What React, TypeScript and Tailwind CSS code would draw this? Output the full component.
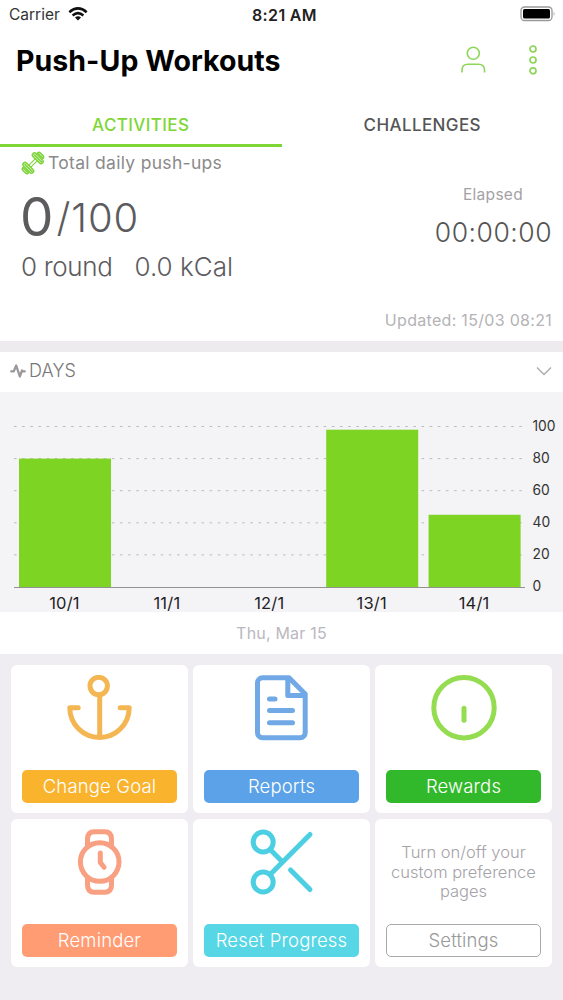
import React, {useState} from 'react';

const days = [
    {label: "10/1", value: 80},
    {label: "11/1", value: 0},
    {label: "12/1", value: 0},
    {label: "13/1", value: 98},
    {label: "14/1", value: 45},
];

const iconProps = {
    viewBox: "0 0 66 66",
    fill: "none",
    strokeWidth: 5,
    strokeLinecap: "round" as const,
    strokeLinejoin: "round" as const,
};

const AnchorIcon = () => (
    <svg {...iconProps} className="w-[66px] h-[66px] stroke-[#f4b653]">
        <circle cx="31.7" cy="11" r="8.7" />
        <path d="M32.7 20v42M11.2 32.7H2.8a29.7 29.7 0 0 0 59.4 0H53.2" />
    </svg>
);

const ReportIcon = () => (
    <svg {...iconProps} className="w-[66px] h-[66px] stroke-[#71a8e6]">
        <path d="M40 2.8H13.5a5 5 0 0 0-5 5v50a5 5 0 0 0 5 5h37.7a5 5 0 0 0 5-5V19L40 2.8M38.8 3.5v17h17" />
        <path d="M20.5 24h5.5M20.5 35.4h23M20.5 47.8h23" />
    </svg>
);

const InfoIcon = () => (
    <svg {...iconProps} className="w-[66px] h-[66px] stroke-[#94dc50]">
        <circle cx="33" cy="32.7" r="30.2" />
        <path d="M33 33.2v12" />
    </svg>
);

const WatchIcon = () => (
    <svg {...iconProps} className="w-[66px] h-[66px] stroke-[#f8a081]">
        <circle cx="32.7" cy="33" r="19.3" />
        <path d="M20.5 17.5V10q0-7.3 7-7.3h10q7 0 7 7.3v7.5M20.5 48.5V56q0 7.3 7 7.3h10q7 0 7-7.3v-7.5" />
        <path d="M33.3 24v9.5l3.8 4.8" />
    </svg>
);

const ScissorsIcon = () => (
    <svg {...iconProps} className="w-[66px] h-[66px] stroke-[#4dcfe3]">
        <circle cx="14.2" cy="13" r="10" />
        <circle cx="14.2" cy="53" r="10" />
        <path d="M21.2 20.5L33.5 33M21.2 45.5L61 5.5M41.5 41l19.5 19.5" />
    </svg>
);

const DumbbellIcon = () => (
    <svg viewBox="0 0 24 24" fill="none" strokeLinecap="round" strokeLinejoin="round" className="w-6 h-6 stroke-[#7ed43c]" strokeWidth="1.5">
        <path d="M12 2.5q1.5-1.5 3 0l6.500 6.500q1.500 1.500 0 3t-3 0L12 5.500q-1.500-1.500 0-3z" fill="#d5f3bd" />
        <path d="M2.500 12q1.500-1.500 3 0l6.500 6.500q1.500 1.500 0 3t-3 0L2.500 15q-1.500-1.500 0-3z" fill="#d5f3bd" />
        <path d="M16.500 2q1.500-1.500 3 0l2.500 2.500q1.500 1.500 0 3zM2 16.500q-1.500 1.500 0 3L4.500 22q1.500 1.500 3 0z" fill="#d5f3bd" />
        <path d="M13.500 4l7 7M4 13.500l7 7" />
        <path d="M13.700 8.300l-5.400 5.400M15.700 10.300l-5.400 5.400" strokeWidth="1.1" />
    </svg>
);

const tiles = [
    {title: "Change Goal", icon: <AnchorIcon />, color: "bg-[#fab32c]"},
    {title: "Reports", icon: <ReportIcon />, color: "bg-[#5ba2e8]"},
    {title: "Rewards", icon: <InfoIcon />, color: "bg-[#32b92b]"},
    {title: "Reminder", icon: <WatchIcon />, color: "bg-[#ff9c74]"},
    {title: "Reset Progress", icon: <ScissorsIcon />, color: "bg-[#57d6e5]"},
];

const StatusBar = () => (
    <div className="flex h-7 items-center justify-between pl-[9px] pr-[7px] pt-px leading-none">
        <div className="flex flex-1 items-center gap-2">
            <span className="text-[15.5px] text-[#333]">Carrier</span>
            <svg viewBox="0 0 20 14" className="w-5 h-3.5 -mt-px" fill="none" stroke="#111" strokeWidth="2.5">
                <path d="M1.3 5.2q8.7-7.6 17.4 0M4.6 8.5q5.4-4.7 10.8 0" />
                <path d="M7 10.4q3-2.3 6 0l-3 3.2z" fill="#111" stroke="none" />
            </svg>
        </div>
        <span className="pl-1 text-[16px] font-semibold tracking-[0.35px] text-[#222]">8:21 AM</span>
        <div className="flex flex-1 justify-end">
            <svg viewBox="0 0 36 16" className="-mt-px w-9 h-4">
                <rect x="1" y="1" width="31" height="13.5" rx="3.5" fill="none" stroke="#999" strokeWidth="1.3" />
                <rect x="3" y="3" width="27" height="9.5" rx="1.5" fill="#000" />
                <path d="M33.7 5.5q1.6 2.2 0 4.5z" fill="#999" />
            </svg>
        </div>
    </div>
);

const DaysChart = () => {
    const scale = 1.605;
    return (
        <svg viewBox="0 0 563 220" className="block h-[220px] w-full bg-[#f4f3f6]">
            {[100, 80, 60, 40, 20, 0].map((tick) => (
                <g key={tick}>
                    {tick > 0 && (
                        <path d={`M14 ${195 - tick * scale}H523`} stroke="#bcbbbe" strokeDasharray="2.6 5.55" />
                    )}
                    <text x="532.5" y={199.3 - tick * scale} fontSize="13.8" fill="#333">{tick}</text>
                </g>
            ))}
            {days.map((day, i) => (
                <g key={day.label}>
                    <rect x={19 + i * 102.4} y={195 - day.value * scale} width="92" height={day.value * scale} fill="#7dd422" />
                    <text x={64.5 + i * 102.4} y="217" fontSize="16.5" letterSpacing="0.2" fill="#222" textAnchor="middle">{day.label}</text>
                </g>
            ))}
            <path d="M14 195.5H525" stroke="#929292" />
        </svg>
    );
};

const App = () => {
    const [tab, setTab] = useState("ACTIVITIES");

    return (
        <div className="flex h-[1000px] w-[563px] flex-col overflow-hidden bg-white font-['Inter',sans-serif]">
            <StatusBar />
            <header className="flex h-16 items-center justify-between pl-4 pr-[22px]">
                <h1 className="pt-0.5 text-[28.5px] font-bold leading-none tracking-[0.05px] text-black">Push-Up Workouts</h1>
                <div className="flex items-center gap-[39px]">
                    <svg viewBox="0 0 26 28" className="w-[26px] h-7" fill="none" stroke="#8ed657" strokeWidth="1.6">
                        <circle cx="13.3" cy="7.2" r="6" />
                        <path d="M2 26.5v-2.5q0-5.8 6-5.8h10.5q6 0 6 5.8v2.5" />
                    </svg>
                    <svg viewBox="0 0 16 32" className="w-4 h-8" fill="none" stroke="#8ed657" strokeWidth="1.7">
                        <circle cx="8" cy="5" r="3" />
                        <circle cx="8" cy="16" r="3" />
                        <circle cx="8" cy="26.8" r="3" />
                    </svg>
                </div>
            </header>
            <nav className="grid h-[55px] grid-cols-2 text-[17px] font-medium leading-none tracking-[0.4px]">
                {["ACTIVITIES", "CHALLENGES"].map((name) => (
                    <button
                        type="button"
                        key={name}
                        onClick={() => setTab(name)}
                        className={`border-b-[3px] pt-3.5 ${tab === name ? "border-[#7ed636] text-[#7ed636]" : "border-transparent text-[#555]"}`}
                    >
                        {name}
                    </button>
                ))}
            </nav>

            <section className="flex h-[194px] flex-col leading-none">
                <div className="flex h-8 items-center pl-[21px]">
                    <DumbbellIcon />
                    <span className="pl-[3px] text-[17.5px] tracking-[0.3px] text-[#8a8a8a]">Total daily push-ups</span>
                </div>
                <div className="flex flex-1 justify-between pl-[21px] pr-3">
                    <div className="text-[#5d5b5e]">
                        <div className="flex h-[77px] items-center">
                            <span className="-ml-px text-[53px] font-normal">0</span>
                            <span className="pl-[3px] text-[40px] font-light tracking-[0.9px]">/100</span>
                        </div>
                        <div className="flex h-[22px] items-center gap-[22px] text-[26px] font-light">
                            <span className="tracking-[-0.35px]">0 round</span>
                            <span>0.0 kCal</span>
                        </div>
                    </div>
                    <div className="flex flex-col items-end pt-2">
                        <span className="mr-7 text-[15.5px] tracking-[0.3px] text-[#a3a2a5]">Elapsed</span>
                        <span className="-mr-px mt-4 text-[26.5px] font-light tracking-[0.5px] text-[#555]">00:00:00</span>
                        <span className="-mr-px mt-[67px] text-[16px] tracking-[0.3px] text-[#b4b3b6]">Updated: 15/03 08:21</span>
                    </div>
                </div>
            </section>

            <section className="border-t-[11px] border-[#edebee]">
                <div className="flex h-[40px] items-center justify-between pb-[3px] pl-2.5 pr-[11px] leading-none">
                    <div className="flex items-center gap-[3px]">
                        <svg viewBox="0 0 16 16" className="w-4 h-4" fill="none" stroke="#999" strokeWidth="2.3" strokeLinejoin="round" strokeLinecap="round">
                            <path d="M1.2 8.3h2.6L6.2 2.5l3.6 11 2.2-6 1 .8h1.8" />
                        </svg>
                        <span className="text-[18px] font-light tracking-[0.1px] text-[#777]">DAYS</span>
                    </div>
                    <svg viewBox="0 0 16 10" className="w-4 h-2.5" fill="none" stroke="#aaa" strokeWidth="1.3">
                        <path d="M1 1.5l7 7 7-7" />
                    </svg>
                </div>
                <DaysChart />
                <div className="flex h-[42px] items-center justify-center leading-none text-[16px] tracking-[0.2px] text-[#bbb7bf]">Thu, Mar 15</div>
            </section>

            <main className="grid flex-1 grid-cols-3 content-start gap-x-[5px] gap-y-1.5 bg-[#efedf1] px-[11px] pt-[11px]">
                {tiles.map((tile) => (
                    <div key={tile.title} className="flex h-[148px] flex-col items-center justify-between rounded-md bg-white px-[11px] pt-2.5 pb-2.5">
                        {tile.icon}
                        <button type="button" className={`h-[33px] w-full rounded-[5px] text-[18.5px] font-light leading-none tracking-[0.15px] text-white ${tile.color}`}>
                            {tile.title}
                        </button>
                    </div>
                ))}
                <div className="flex h-[148px] flex-col items-center justify-between rounded-md bg-white px-[11px] pt-6 pb-2.5">
                    <p className="text-center text-[16.5px] font-light leading-[19.5px] text-[#a5a2a8]">Turn on/off your custom preference pages</p>
                    <button type="button" className="h-[33px] w-full rounded-[5px] border border-[#aaa] text-[18.5px] font-light leading-none tracking-[0.15px] text-[#999]">
                        Settings
                    </button>
                </div>
            </main>
        </div>
    );
};

export default App;
